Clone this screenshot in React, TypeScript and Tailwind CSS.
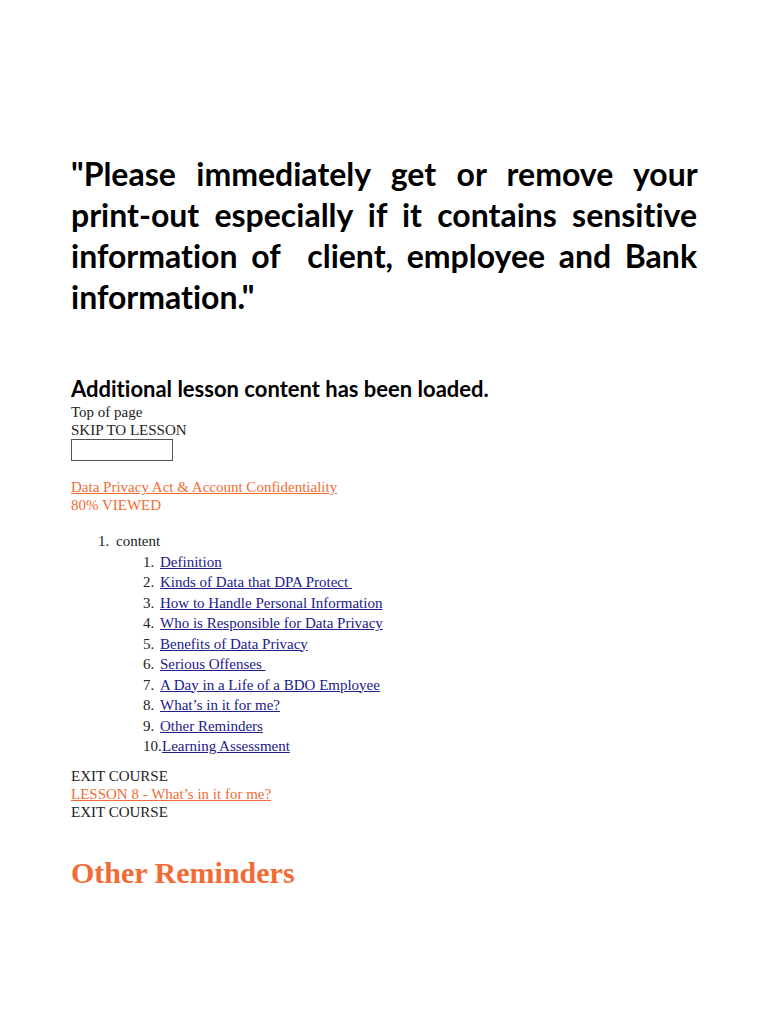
const TOPICS = [
  "Definition",
  "Kinds of Data that DPA Protect\u00a0",
  "How to Handle Personal Information",
  "Who is Responsible for Data Privacy",
  "Benefits of Data Privacy",
  "Serious Offenses\u00a0",
  "A Day in a Life of a BDO Employee",
  "What\u2019s in it for me?",
  "Other Reminders",
  "Learning Assessment",
];

const serif = "font-['Liberation_Serif',serif]";
const calibri = "font-['Lato','Carlito',sans-serif] [font-variant-ligatures:none]";

export default function App() {
  return (
    <div className={`min-h-[1024px] bg-white px-[71px] pt-[153px] text-[15px] text-[#222] ${serif}`}>
      <p className={`text-justify text-[32px] font-bold leading-[41px] text-black ${calibri}`}>
        "Please immediately get or remove your{" "}
        <span className="whitespace-nowrap">print-out</span> especially if it contains sensitive
        information of&nbsp; client, employee and Bank information."
      </p>

      <h2 className={`mt-[59px] text-[22px] font-bold leading-[26px] text-black ${calibri}`}>
        Additional lesson content has been loaded.
      </h2>

      <div className="mt-px leading-[18px]">Top of page</div>
      <div className="leading-[18px]">SKIP TO LESSON</div>
      <div className="h-[22px] w-[102px] border border-[#555]" />

      <a href="#" className="mt-[17px] block leading-[18px] text-[#f26b35] underline">
        Data Privacy Act &amp; Account Confidentiality
      </a>
      <div className="leading-[18px] text-[#f26b35]">80% VIEWED</div>

      <ol className="mt-[17px] pl-[27px] leading-[20.5px]">
        <li className="flex">
          <span className="w-[18px] shrink-0">1.</span>
          <div>
            content
            <ol className="-ml-[45px] pl-[72px]">
              {TOPICS.map((t, i) => (
                <li key={t} className="flex">
                  <span className="w-[17px] shrink-0 whitespace-nowrap">{i + 1}.</span>
                  <a href="#" className={`text-[#20208c] underline ${i === 9 ? "ml-[2px]" : ""}`}>
                    {t}
                  </a>
                </li>
              ))}
            </ol>
          </div>
        </li>
      </ol>

      <div className="mt-[10px] leading-[18px]">EXIT COURSE</div>
      <a href="#" className="block leading-[18px] text-[#f26b35] underline">
        LESSON 8 - What’s in it for me?
      </a>
      <div className="leading-[18px]">EXIT COURSE</div>

      <h1 className="mt-[35px] text-[30px] font-bold leading-[34px] text-[#f26b35]">
        Other Reminders
      </h1>
    </div>
  );
}
